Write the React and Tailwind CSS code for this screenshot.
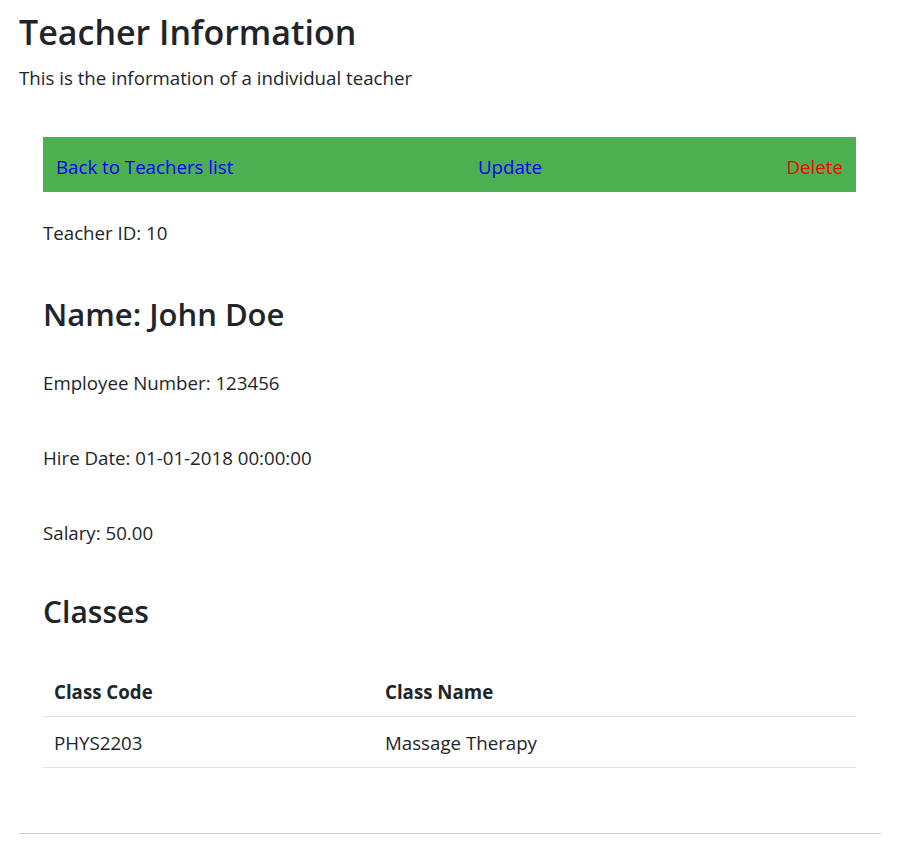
export default function App() {
  const classes = [{ code: 'PHYS2203', name: 'Massage Therapy' }];

  return (
    <div className="min-h-screen bg-white pl-[19px] pr-[39px] pt-[12px] text-[18.7px] leading-[27px] text-[#212529]" style={{ fontFamily: '"Segoe UI", "Open Sans", "Noto Sans", sans-serif' }}>
      <h1 className="text-[34px] font-semibold leading-[40px]">Teacher Information</h1>
      <p className="mt-[12px]">This is the information of a individual teacher</p>

      <div className="ml-[24px] mr-[25px] mt-[46px]">
        <nav className="flex h-[55px] items-center justify-between bg-[#4caf50] px-[13px] pt-[4px]">
          <a href="#" className="text-[#0000ff]">Back to Teachers list</a>
          <a href="#" className="text-[#0000ff]">Update</a>
          <a href="#" className="text-[#ff0000]">Delete</a>
        </nav>

        <p className="mt-[27px]">Teacher ID: 10</p>
        <h2 className="mt-[50px] text-[31px] font-semibold leading-[36px]">Name: John Doe</h2>
        <p className="mt-[37px]">Employee Number: 123456</p>
        <p className="mt-[48px]">Hire Date: 01-01-2018 00:00:00</p>
        <p className="mt-[48px]">Salary: 50.00</p>
        <h2 className="mt-[48px] text-[30px] font-semibold leading-[36px]">Classes</h2>

        <table className="mt-[37px] w-full border-collapse text-left">
          <thead>
            <tr className="border-b border-[#dee2e6]">
              <th className="w-[331px] px-[11px] py-[11px] font-bold">Class Code</th>
              <th className="px-[11px] py-[11px] font-bold">Class Name</th>
            </tr>
          </thead>
          <tbody>
            {classes.map((c) => (
              <tr key={c.code} className="border-b border-[#dee2e6]">
                <td className="px-[11px] pb-[11px] pt-[12px]">{c.code}</td>
                <td className="px-[11px] pb-[11px] pt-[12px]">{c.name}</td>
              </tr>
            ))}
          </tbody>
        </table>
      </div>

      <hr className="mt-[65px] border-t border-[#cccccc]" />
    </div>
  );
}
